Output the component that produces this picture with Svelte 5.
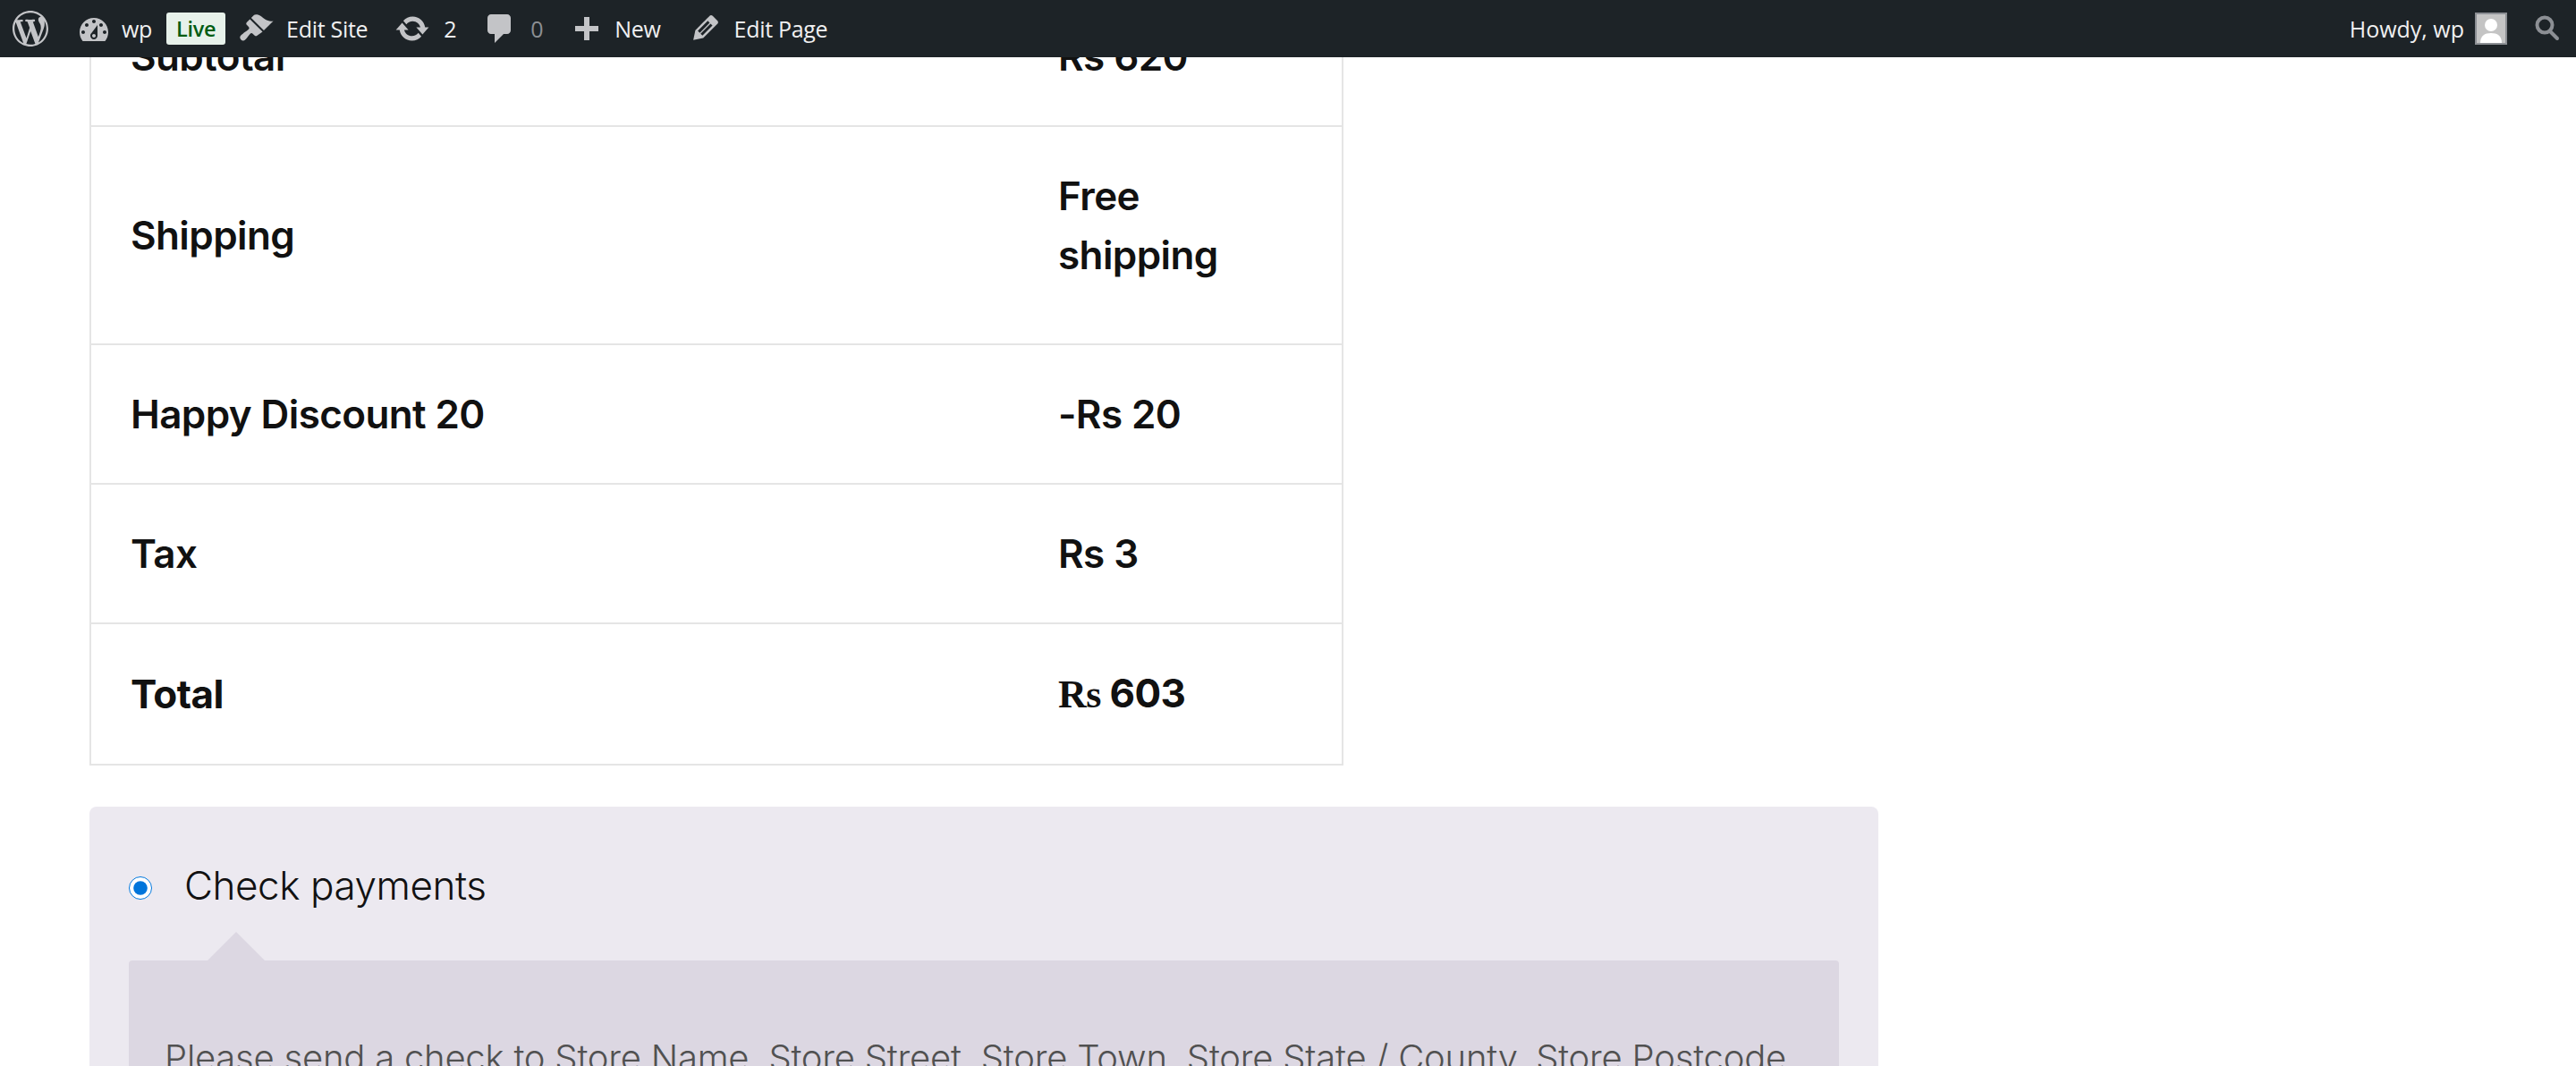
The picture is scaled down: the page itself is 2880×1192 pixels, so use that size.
<script lang="ts">
	const rows = [
		{ label: "Subtotal", value: "Rs 620" },
		{ label: "Shipping", lines: ["Free", "shipping"] },
		{ label: "Happy Discount 20", value: "-Rs 20" },
		{ label: "Tax", value: "Rs 3" }
	];
</script>

<header class="adminbar">
	<div class="group">
		<a class="logo" href="#top" aria-label="WordPress">
			<svg viewBox="0 0 20 20"><path d="M20 10c0-5.51-4.49-10-10-10C4.48 0 0 4.49 0 10c0 5.52 4.48 10 10 10 5.51 0 10-4.48 10-10zM7.78 15.37L4.37 6.22c.55-.02 1.17-.08 1.17-.08.5-.06.44-1.13-.06-1.11 0 0-1.45.11-2.37.11-.18 0-.37 0-.58-.01C4.12 2.69 6.87 1.11 10 1.11c2.33 0 4.45.87 6.05 2.34-.68-.11-1.65.39-1.65 1.58 0 .74.45 1.36.9 2.1.35.61.55 1.36.55 2.46 0 1.49-1.4 5-1.4 5l-3.03-8.37c.54-.02.82-.17.82-.17.5-.05.44-1.25-.06-1.22 0 0-1.44.12-2.38.12-.87 0-2.33-.12-2.33-.12-.5-.03-.56 1.2-.06 1.22l.92.08 1.26 3.41zM17.41 10c.24-.64.74-1.87.43-4.25.7 1.29 1.05 2.71 1.05 4.25 0 3.29-1.73 6.24-4.4 7.78.97-2.59 1.94-5.2 2.92-7.78zM6.1 18.09C3.12 16.65 1.11 13.53 1.11 10c0-1.3.23-2.48.72-3.59C3.25 10.3 4.67 14.2 6.1 18.09zm4.03-6.63l2.58 6.98c-.86.29-1.76.45-2.71.45-.79 0-1.57-.11-2.29-.33.81-2.38 1.62-4.74 2.42-7.1z"/></svg>
		</a>
		<a class="item site" href="#top">
			<svg viewBox="1.5 2.5 17 13.5"><path fill-rule="evenodd" d="M3.76 16h12.48c1.1-1.37 1.76-3.11 1.76-5 0-4.42-3.58-8-8-8s-8 3.58-8 8c0 1.89.66 3.63 1.76 5zM10 4c.55 0 1 .45 1 1s-.45 1-1 1-1-.45-1-1 .45-1 1-1zM6 6c.55 0 1 .45 1 1s-.45 1-1 1-1-.45-1-1 .45-1 1-1zm8 0c.55 0 1 .45 1 1s-.45 1-1 1-1-.45-1-1 .45-1 1-1zm-5.37 5.55L12 7v6c0 1.1-.9 2-2 2s-2-.9-2-2c0-.57.24-1.08.63-1.45zM4 10c.55 0 1 .45 1 1s-.45 1-1 1-1-.45-1-1 .45-1 1-1zm12 0c.55 0 1 .45 1 1s-.45 1-1 1-1-.45-1-1 .45-1 1-1zm-5 3c0-.55-.45-1-1-1s-1 .45-1 1 .45 1 1 1 1-.45 1-1z"/></svg>
			wp
		</a>
		<span class="live">Live</span>
		<a class="item brush" href="#top">
			<svg viewBox="0 0 20 20"><path d="M14.48 11.06L7.41 3.99l1.5-1.5c.5-.56 2.3-.47 3.51.32 1.21.8 1.43 1.28 2.91 2.1 1.18.64 2.45 1.26 4.45.85zm-.71.71L6.7 4.7 4.93 6.47c-.39.39-.39 1.02 0 1.41l1.06 1.06c.39.39.39 1.03 0 1.42-.6.6-1.43 1.11-2.21 1.69-.35.26-.7.53-1.01.84C1.43 13.71.96 14.56 1.2 15.3c.12.38.24.7.58.98.4.32.8.52 1.3.46.94-.1 1.62-1.05 2.1-1.7.58-.78 1.09-1.61 1.69-2.21.39-.39 1.03-.39 1.42 0l1.06 1.06c.39.39 1.02.39 1.41 0z"/></svg>
			Edit Site
		</a>
		<a class="item updates" href="#top">
			<svg viewBox="0 0 20 20"><path d="M10.2 3.28c3.53 0 6.43 2.61 6.92 6h2.08l-3.5 4-3.5-4h2.32c-.45-1.97-2.21-3.44-4.32-3.44-1.45 0-2.73.71-3.54 1.78L4.95 5.66C6.23 4.2 8.11 3.28 10.2 3.28zm-.4 13.44c-3.52 0-6.43-2.61-6.92-6H.8l3.5-4c1.17 1.33 2.33 2.67 3.5 4H5.48c.45 1.97 2.21 3.44 4.32 3.44 1.45 0 2.73-.71 3.54-1.78l1.71 1.95c-1.28 1.46-3.15 2.39-5.25 2.39z"/></svg>
			2
		</a>
		<a class="item comments" href="#top">
			<svg viewBox="3 2 13 16"><path d="M5 2h9c1.1 0 2 .9 2 2v7c0 1.1-.9 2-2 2h-2l-5 5v-5H5c-1.1 0-2-.9-2-2V4c0-1.1.9-2 2-2z"/></svg>
			<span class="zero">0</span>
		</a>
		<a class="item new" href="#top">
			<svg viewBox="4 2 13 13"><path d="M17 7h-5V2H9v5H4v3h5v5h3v-5h5V7z"/></svg>
			New
		</a>
		<a class="item page" href="#top">
			<svg viewBox="3 3 14 15"><path fill-rule="evenodd" d="M13.89 3.39l2.71 2.72c.46.46.42 1.24.03 1.64l-8.01 8.02-5.56 1.16 1.16-5.58s7.6-7.63 7.99-8.03c.39-.39 1.22-.39 1.68.07zm-2.73 2.79l-5.59 5.61 1.11 1.11 5.54-5.65zm-2.97 8.23l5.58-5.6-1.07-1.08-5.59 5.6z"/></svg>
			Edit Page
		</a>
	</div>
	<div class="group">
		<a class="item howdy" href="#top">
			Howdy, wp
			<span class="avatar">
				<svg viewBox="0 0 32 32"><circle cx="16" cy="12" r="7"/><path d="M4 32c0-8 5-11 12-11s12 3 12 11z"/></svg>
			</span>
		</a>
		<a class="search" href="#top" aria-label="Search">
			<svg viewBox="0 0 30 32"><circle cx="12" cy="12" r="8.5"/><path d="M18 19l8 8"/></svg>
		</a>
	</div>
</header>

<main>
	<table class="totals">
		<colgroup>
			<col class="label-col" />
			<col class="value-col" />
		</colgroup>
		<tbody>
			{#each rows as row}
				<tr>
					<th>{row.label}</th>
					<td>
						{#if row.lines}
							<p>{row.lines[0]}<br />{row.lines[1]}</p>
						{:else}
							{row.value}
						{/if}
					</td>
				</tr>
			{/each}
			<tr class="total">
				<th>Total</th>
				<td><span class="currency">Rs</span> 603</td>
			</tr>
		</tbody>
	</table>

	<section class="payment">
		<label class="method">
			<input type="radio" name="payment" checked />
			Check payments
		</label>
		<div class="box">
			<p>Please send a check to Store Name, Store Street, Store Town, Store State / County, Store Postcode.</p>
		</div>
	</section>
</main>

<style>
	:global(html),
	:global(body) {
		height: 1192px;
		overflow: hidden;
		background: #fff;
	}

	.adminbar {
		position: fixed;
		inset: 0 0 auto 0;
		z-index: 10;
		height: 64px;
		display: flex;
		justify-content: space-between;
		background: #1d2327;
		color: #f0f0f1;
		font-family: "Open Sans", sans-serif;
		font-size: 25px;
		letter-spacing: -0.3px;
	}

	.group {
		display: flex;
		align-items: center;
	}

	.adminbar a {
		color: inherit;
		text-decoration: none;
	}

	.adminbar svg {
		display: block;
		fill: #c3c4c7;
	}

	.logo {
		margin-left: 14px;
	}

	.logo svg {
		width: 40px;
		height: 40px;
	}

	.item {
		display: flex;
		align-items: center;
		white-space: nowrap;
	}

	.site {
		margin-left: 34px;
		gap: 14px;
	}

	.site svg {
		width: 34px;
		height: 27px;
	}

	.live {
		margin-left: 16px;
		width: 66px;
		height: 36px;
		display: flex;
		align-items: center;
		justify-content: center;
		border-radius: 3px;
		background: #e7f1ea;
		color: #005c12;
		font-weight: 600;
		font-size: 23.5px;
	}

	.brush {
		margin-left: 14px;
		gap: 14px;
	}

	.brush svg {
		width: 40px;
		height: 40px;
	}

	.updates {
		margin-left: 30px;
		gap: 15px;
	}

	.updates svg {
		width: 40px;
		height: 40px;
	}

	.comments {
		margin-left: 35px;
		gap: 22px;
	}

	.comments svg {
		width: 26px;
		height: 32px;
	}

	.zero {
		color: #8c8f94;
	}

	.new {
		margin-left: 36px;
		gap: 18px;
	}

	.new svg {
		width: 26px;
		height: 26px;
	}

	.page {
		margin-left: 36px;
		gap: 18px;
	}

	.page svg {
		width: 28px;
		height: 30px;
	}

	.howdy {
		gap: 12px;
		letter-spacing: 0;
	}

	.avatar {
		width: 36px;
		height: 36px;
		box-sizing: border-box;
		border: 2px solid #8c8f94;
		background: #c4c4c4;
		overflow: hidden;
	}

	.avatar svg {
		width: 32px;
		height: 32px;
		fill: #fff;
	}

	.search {
		margin-left: 30px;
		margin-right: 17px;
	}

	.adminbar .search svg {
		width: 30px;
		height: 32px;
		fill: none;
		stroke: #8c8f94;
		stroke-width: 4;
		stroke-linecap: round;
	}

	main {
		margin-top: -16px;
		padding-left: 100px;
		font-family: Inter, sans-serif;
		color: #111;
	}

	.totals {
		width: 1400px;
		table-layout: fixed;
		border-collapse: collapse;
		border: 2px solid #e5e5e5;
		font-size: 44px;
		line-height: 66px;
		font-weight: 600;
		letter-spacing: -0.6px;
	}

	.label-col {
		width: 1038px;
	}

	.value-col {
		width: 362px;
	}

	th,
	td {
		padding: 44px;
		border-top: 2px solid #e5e5e5;
		border-bottom: 2px solid #e5e5e5;
		text-align: left;
		font-weight: inherit;
		vertical-align: middle;
	}

	td p {
		margin: 0 0 22px;
	}

	.total td,
	.total th {
		font-weight: 700;
	}

	.currency {
		font-family: "Liberation Serif", serif;
		font-weight: 700;
	}

	.payment {
		width: 2000px;
		margin-top: 46px;
		box-sizing: border-box;
		padding: 55px 44px 44px;
		border-radius: 8px;
		background: #ece9f0;
	}

	.method {
		display: flex;
		align-items: center;
		gap: 36px;
		height: 66px;
		font-size: 44px;
		font-weight: 300;
		letter-spacing: -0.45px;
		color: #111;
	}

	.method input {
		width: 26px;
		height: 26px;
		margin: 6px 0 0;
		accent-color: #0075db;
	}

	.box {
		position: relative;
		margin-top: 51px;
		padding: 79px 40px;
		border-radius: 4px;
		background: #dcd7e2;
		color: #515151;
		font-size: 40px;
		font-weight: 300;
		line-height: 60px;
		letter-spacing: -0.22px;
	}

	.box::before {
		content: "";
		position: absolute;
		left: 88px;
		top: -32px;
		width: 64px;
		height: 32px;
		background: #dcd7e2;
		clip-path: polygon(50% 0, 100% 100%, 0 100%);
	}

	.box p {
		margin: 0;
	}
</style>
